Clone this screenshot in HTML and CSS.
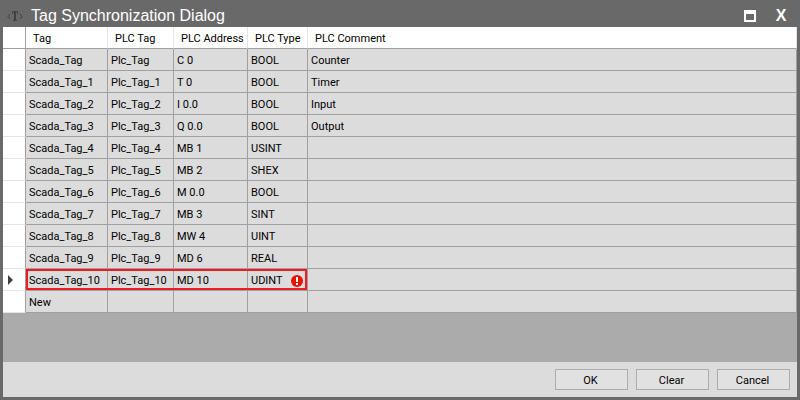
FILE: index.html
```html
<!DOCTYPE html>
<html lang="en">
<head>
    <meta charset="UTF-8">
    <meta name="viewport" content="width=device-width, initial-scale=1.0">
    <title>Tag Synchronization Dialog</title>
    <link rel="stylesheet" href="styles.css">
</head>
<body>
    <div class="dialog">
        <header class="titlebar">
            <svg class="logo" width="16" height="12" viewBox="0 0 16 12" fill="none" stroke="#404040">
                <path d="M3 4L1 6.500L3 9M13 4l2 2.500L13 9"/>
                <path d="M5.500 4V1.500h5V4M6 10.500h4"/>
                <path d="M8 1v10" stroke-width="2"/>
            </svg>
            <h1>Tag Synchronization Dialog</h1>
            <button type="button" class="window-button" aria-label="Maximize">
                <svg width="12" height="12" viewBox="0 0 12 12"><path fill="#fff" fill-rule="evenodd" d="M0 0h12v12H0zM2 4v6h8V4z"/></svg>
            </button>
            <button type="button" class="window-button" aria-label="Close">X</button>
        </header>

        <main class="grid">
            <table>
                <colgroup>
                    <col class="col-select">
                    <col class="col-tag">
                    <col class="col-plc-tag">
                    <col class="col-address">
                    <col class="col-type">
                    <col>
                </colgroup>
                <thead>
                    <tr><th></th><th>Tag</th><th>PLC Tag</th><th>PLC Address</th><th>PLC Type</th><th>PLC Comment</th></tr>
                </thead>
                <tbody>
                    <tr><td></td><td>Scada_Tag</td><td>Plc_Tag</td><td>C 0</td><td>BOOL</td><td>Counter</td></tr>
                    <tr><td></td><td>Scada_Tag_1</td><td>Plc_Tag_1</td><td>T 0</td><td>BOOL</td><td>Timer</td></tr>
                    <tr><td></td><td>Scada_Tag_2</td><td>Plc_Tag_2</td><td>I 0.0</td><td>BOOL</td><td>Input</td></tr>
                    <tr><td></td><td>Scada_Tag_3</td><td>Plc_Tag_3</td><td>Q 0.0</td><td>BOOL</td><td>Output</td></tr>
                    <tr><td></td><td>Scada_Tag_4</td><td>Plc_Tag_4</td><td>MB 1</td><td>USINT</td><td></td></tr>
                    <tr><td></td><td>Scada_Tag_5</td><td>Plc_Tag_5</td><td>MB 2</td><td>SHEX</td><td></td></tr>
                    <tr><td></td><td>Scada_Tag_6</td><td>Plc_Tag_6</td><td>M 0.0</td><td>BOOL</td><td></td></tr>
                    <tr><td></td><td>Scada_Tag_7</td><td>Plc_Tag_7</td><td>MB 3</td><td>SINT</td><td></td></tr>
                    <tr><td></td><td>Scada_Tag_8</td><td>Plc_Tag_8</td><td>MW 4</td><td>UINT</td><td></td></tr>
                    <tr><td></td><td>Scada_Tag_9</td><td>Plc_Tag_9</td><td>MD 6</td><td>REAL</td><td></td></tr>
                    <tr class="current">
                        <td><svg class="pointer" width="5" height="10" viewBox="0 0 5 10"><path fill="#404040" d="M0 0l5 5-5 5z"/></svg><span class="error-frame"></span></td>
                        <td>Scada_Tag_10</td>
                        <td>Plc_Tag_10</td>
                        <td>MD 10</td>
                        <td>
                            <div class="error-cell">
                                UDINT
                                <svg width="12" height="12" viewBox="0 0 12 12"><circle cx="6" cy="6" r="6" fill="#e51400"/><path fill="#fff" d="M5 2h2v5H5zM5 8h2v2H5z"/></svg>
                            </div>
                        </td>
                        <td></td>
                    </tr>
                    <tr><td></td><td>New</td><td></td><td></td><td></td><td></td></tr>
                </tbody>
            </table>
        </main>

        <footer class="actions">
            <button type="button" class="button">OK</button>
            <button type="button" class="button">Clear</button>
            <button type="button" class="button">Cancel</button>
        </footer>
    </div>
</body>
</html>
```
FILE: styles.css
```css
* {
    box-sizing: border-box;
}
body {
    margin: 0;
    font-family: Roboto, Arial, sans-serif;
    font-size: 11px;
    color: #000;
}
.dialog {
    display: flex;
    flex-direction: column;
    min-height: 100vh;
    padding: 0 3px 3px;
    background-color: #696969;
}
.titlebar {
    display: flex;
    align-items: center;
    height: 27px;
    padding: 4px 6px 0 4px;
    color: #fff;
}
.titlebar h1 {
    flex: 1;
    margin: 0 0 0 8px;
    font-family: "Liberation Sans", Arial, sans-serif;
    font-size: 16px;
    font-weight: normal;
    line-height: 24px;
}
.window-button {
    display: flex;
    align-items: center;
    justify-content: center;
    width: 20px;
    height: 20px;
    margin-left: 11px;
    padding: 0;
    border: none;
    background: none;
    color: #fff;
    font: bold 16px "Liberation Sans", Arial, sans-serif;
}
.grid {
    flex: 1;
    background-color: #ababab;
}
table {
    width: 100%;
    table-layout: fixed;
    border-collapse: separate;
    border-spacing: 0;
}
.col-select {
    width: 23px;
}
.col-tag {
    width: 82px;
}
.col-plc-tag {
    width: 66px;
}
.col-address {
    width: 74px;
}
.col-type {
    width: 60px;
}
th, td {
    height: 22px;
    padding: 2px 3px 0;
    border-right: 1px solid #a0a0a0;
    border-bottom: 1px solid #a0a0a0;
    background-color: #dcdcdc;
    font-weight: normal;
    line-height: 16px;
    text-align: left;
    white-space: nowrap;
}
th {
    padding: 2px 0 0 7px;
    border-right-color: #e5e5e5;
    background-color: #fff;
}
th:first-child {
    border-right-color: #a0a0a0;
}
td:first-child {
    padding: 0 5px;
    border-bottom-color: #e5e5e5;
    background-color: #fff;
}
.current {
    position: relative;
}
.pointer {
    display: block;
}
/* red frame over the tag, address and type cells */
.error-frame {
    position: absolute;
    top: 0;
    left: 23px;
    width: 281px;
    height: 21px;
    border: 2px solid #ed1c24;
}
.error-cell {
    display: flex;
    align-items: center;
    justify-content: space-between;
    padding-right: 1px;
}
.actions {
    display: flex;
    justify-content: flex-end;
    gap: 8px;
    padding: 7px;
    background-color: #dcdcdc;
}
.button {
    width: 73px;
    height: 21px;
    padding: 1px 2px 0 0;
    border: 1px solid #adadad;
    background-color: #e1e1e1;
    color: #000;
    font: 11px Roboto, Arial, sans-serif;
}
```
